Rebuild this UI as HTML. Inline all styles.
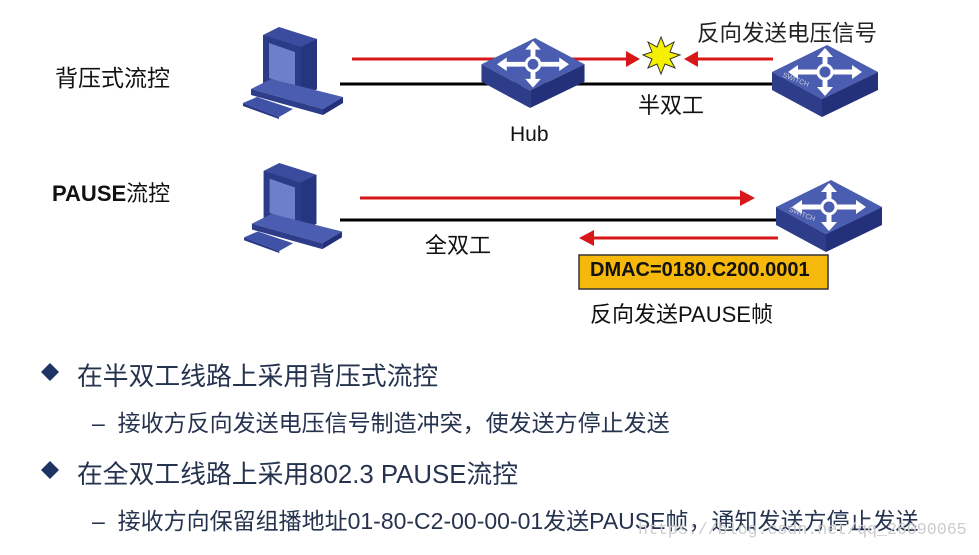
<!DOCTYPE html>
<html><head><meta charset="utf-8"><style>
body{margin:0;width:979px;height:555px;background:#fff;overflow:hidden;position:relative;font-family:"Liberation Sans","Noto Sans CJK SC",sans-serif}
.t{position:absolute;white-space:nowrap;color:#111}
.b{color:#26334f}
</style></head><body>
<svg width="979" height="555" style="position:absolute;left:0;top:0">
<defs>
<symbol id="sw" viewBox="0 0 106 72">
<polygon points="0,27 55,0 106,27 50,54" fill="#4a5db0"/>
<polygon points="0,27 50,54 50,72 0,45" fill="#2e3d8a"/>
<polygon points="50,54 106,27 106,45 50,72" fill="#23307a"/>
<g stroke="#fff" stroke-width="5" fill="none" stroke-linecap="round">
<line x1="53" y1="27" x2="53" y2="8"/><line x1="53" y1="27" x2="53" y2="46"/>
<line x1="53" y1="27" x2="22" y2="27"/><line x1="53" y1="27" x2="84" y2="27"/>
</g>
<g fill="#fff"><polygon points="53,3 45,12 61,12"/><polygon points="53,51 45,42 61,42"/><polygon points="16,27 26,20 26,34"/><polygon points="90,27 80,20 80,34"/></g>
<circle cx="53" cy="27" r="7" fill="#4a5db0" stroke="#fff" stroke-width="3"/>
</symbol>
<symbol id="pc" viewBox="0 0 102 92">
<polygon points="20,8 36,0 74,12 74,62 58,72 20,58" fill="#3b4c9e"/>
<polygon points="20,8 58,20 58,72 20,58" fill="#2c3b88"/>
<polygon points="26,16 52,25 52,60 26,51" fill="#6d7fc8"/>
<polygon points="58,20 74,12 74,62 58,72" fill="#263580"/>
<polygon points="8,62 28,52 100,70 80,82" fill="#4a5db0"/>
<polygon points="8,62 80,82 80,88 8,68" fill="#2e3d8a"/>
<polygon points="80,82 100,70 100,76 80,88" fill="#22307a"/>
<polygon points="0,76 14,70 50,82 36,90" fill="#3f52a6"/>
<polygon points="0,76 36,90 36,92 0,79" fill="#2a3985"/>
</symbol>
</defs>
<line x1="340" y1="84" x2="780" y2="84" stroke="#000" stroke-width="3"/>
<line x1="352" y1="59" x2="628" y2="59" stroke="#d81818" stroke-width="3"/>
<polygon points="626,51 640,59 626,67" fill="#d81818"/>
<line x1="696" y1="59" x2="773" y2="59" stroke="#d81818" stroke-width="3"/>
<polygon points="698,51 684,59 698,67" fill="#d81818"/>
<polygon points="661,37 665,47 674,42 670,52 680,55 670,59 675,68 665,64 661,74 657,64 648,68 652,59 643,55 652,52 648,42 657,47" fill="#f4f000" stroke="#333" stroke-width="1"/>
<use href="#pc" x="243" y="27" width="102" height="92"/>
<use href="#sw" x="480" y="38" width="106" height="70"/>
<use href="#sw" x="772" y="45" width="106" height="72"/>
<text x="780" y="82" transform="rotate(22 795 85)" font-size="7" fill="#ccd" font-family="Liberation Sans">SWITCH</text>
<line x1="340" y1="220" x2="780" y2="220" stroke="#000" stroke-width="3"/>
<line x1="360" y1="198" x2="742" y2="198" stroke="#d81818" stroke-width="3"/>
<polygon points="740,190 755,198 740,206" fill="#d81818"/>
<line x1="590" y1="238" x2="778" y2="238" stroke="#d81818" stroke-width="3"/>
<polygon points="594,230 579,238 594,246" fill="#d81818"/>
<use href="#pc" x="243" y="163" width="102" height="90"/>
<use href="#sw" x="776" y="180" width="106" height="72"/>
<text x="786" y="216" transform="rotate(22 800 220)" font-size="7" fill="#ccd" font-family="Liberation Sans">SWITCH</text>
<rect x="579" y="255" width="249" height="34" fill="#f6b80a" stroke="#333" stroke-width="1.5"/>
<polygon points="50,363 59,372 50,381 41,372" fill="#1f3364"/>
<polygon points="50,461 59,470 50,479 41,470" fill="#1f3364"/>
</svg>
<div class="t" style="left:55px;top:59px;font-size:23px">背压式流控</div>
<div class="t" style="left:52px;top:176px;font-size:22px;font-weight:bold">PAUSE<span style="font-weight:normal">流控</span></div>
<div class="t" style="left:697px;top:16px;font-size:22.5px;color:#222">反向发送电压信号</div>
<div class="t" style="left:638px;top:88px;font-size:22px">半双工</div>
<div class="t" style="left:510px;top:123px;font-size:21px">Hub</div>
<div class="t" style="left:425px;top:228px;font-size:22px">全双工</div>
<div class="t" style="left:590px;top:259px;font-size:20px;font-weight:bold">DMAC=0180.C200.0001</div>
<div class="t" style="left:590px;top:297px;font-size:22px">反向发送PAUSE帧</div>
<div class="t b" style="left:77px;top:356px;font-size:25.8px">在半双工线路上采用背压式流控</div>
<div class="t b" style="left:92px;top:404px;font-size:23px">–&nbsp;&nbsp;接收方反向发送电压信号制造冲突，使发送方停止发送</div>
<div class="t b" style="left:77px;top:454px;font-size:25.8px">在全双工线路上采用802.3 PAUSE流控</div>
<div class="t b" style="left:92px;top:502px;font-size:23px">–&nbsp;&nbsp;接收方向保留组播地址01-80-C2-00-00-01发送PAUSE帧，通知发送方停止发送</div>
<div class="t" style="left:638px;top:520px;font-size:16.6px;color:#ccc;font-family:'Liberation Mono',monospace">https://blog.csdn.net/qq_26090065</div>
</body></html>
